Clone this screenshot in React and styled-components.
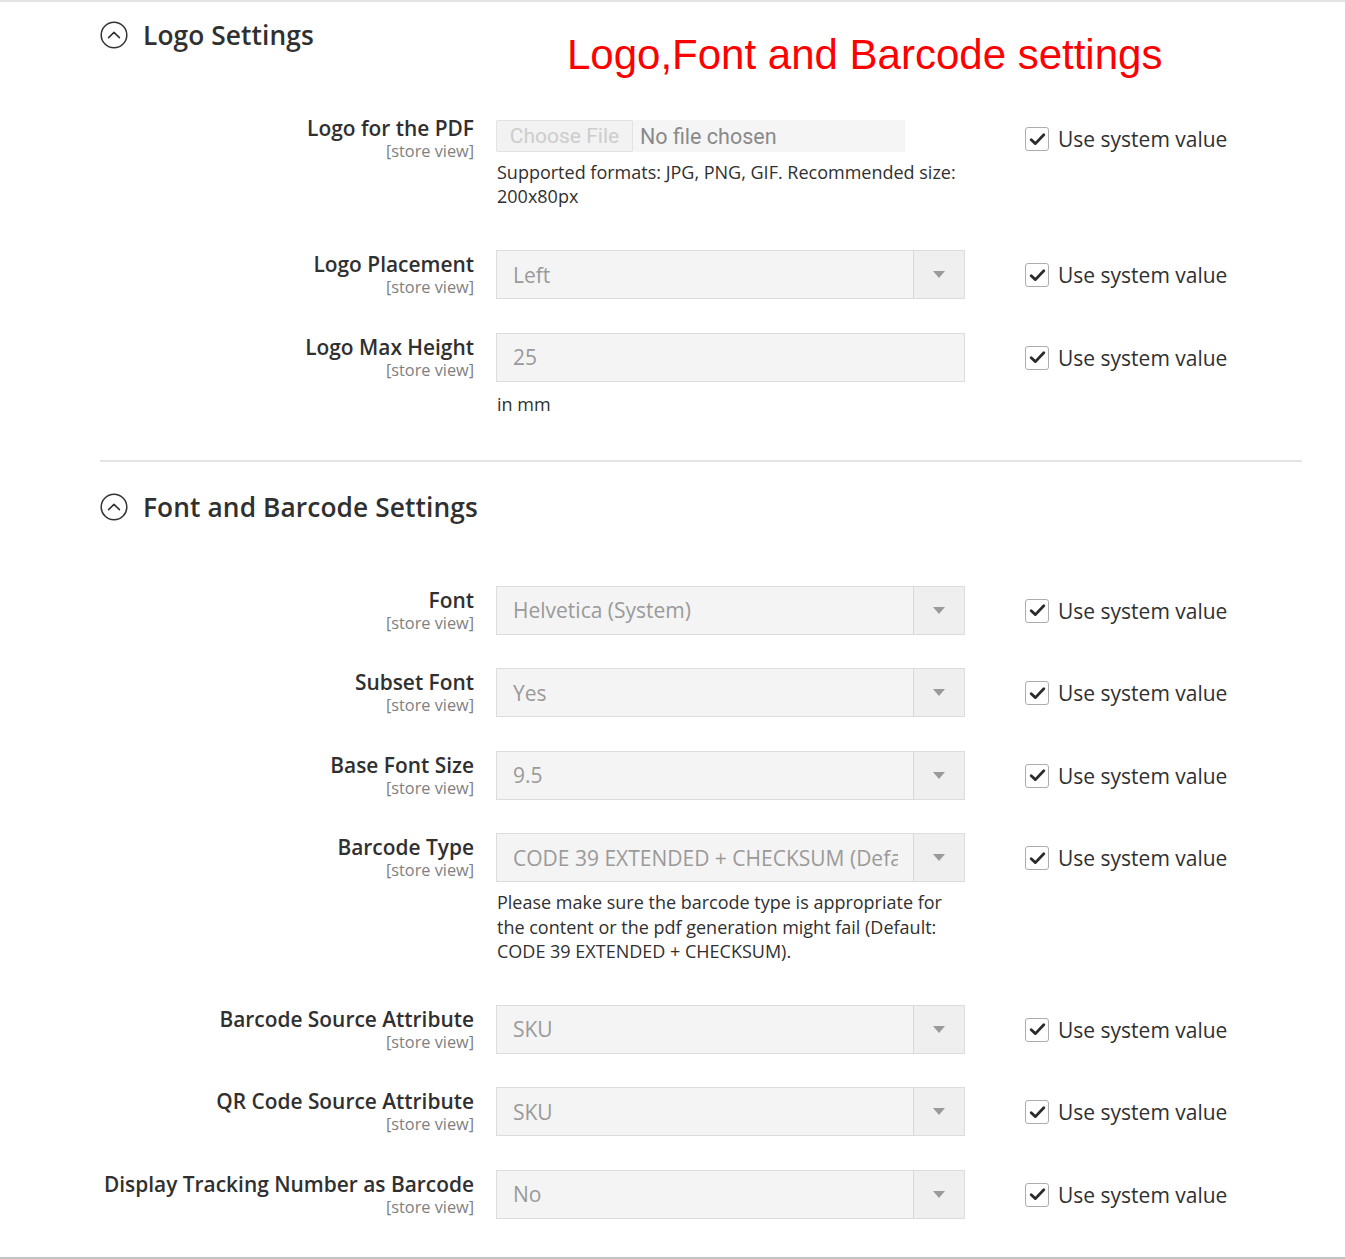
import React from "react";
import styled, { createGlobalStyle } from "styled-components";

const GlobalStyle = createGlobalStyle`
  html, body {
    margin: 0;
    padding: 0;
    background: #fff;
  }
  body {
    font-family: "Open Sans", "DejaVu Sans", sans-serif;
    color: #303030;
  }
`;

const logoFields = [
  { label: "Logo for the PDF", type: "file", note: "Supported formats: JPG, PNG, GIF. Recommended size: 200x80px" },
  { label: "Logo Placement", type: "select", value: "Left" },
  { label: "Logo Max Height", type: "input", value: "25", note: "in mm" },
];

const fontFields = [
  { label: "Font", type: "select", value: "Helvetica (System)" },
  { label: "Subset Font", type: "select", value: "Yes" },
  { label: "Base Font Size", type: "select", value: "9.5" },
  {
    label: "Barcode Type",
    type: "select",
    value: "CODE 39 EXTENDED + CHECKSUM (Default)",
    note: "Please make sure the barcode type is appropriate for the content or the pdf generation might fail (Default: CODE 39 EXTENDED + CHECKSUM).",
  },
  { label: "Barcode Source Attribute", type: "select", value: "SKU" },
  { label: "QR Code Source Attribute", type: "select", value: "SKU" },
  { label: "Display Tracking Number as Barcode", type: "select", value: "No" },
];

const CollapseIcon = () => (
  <svg width="28" height="28" viewBox="0 0 28 28" fill="none">
    <circle cx="14" cy="14" r="12.8" stroke="#333" strokeWidth="1.5" />
    <path d="M8.6 16.6 L14 11.4 L19.4 16.6" stroke="#333" strokeWidth="1.6" strokeLinecap="round" strokeLinejoin="round" />
  </svg>
);

const CheckIcon = () => (
  <svg width="17" height="15" viewBox="0 0 17 15" fill="none">
    <path d="M2.2 7.8 L6.4 11.6 L14.8 2.8" stroke="#2b2b2b" strokeWidth="2.8" strokeLinecap="round" strokeLinejoin="round" />
  </svg>
);

const renderControl = (field) => {
  if (field.type === "file") {
    return (
      <FileBox>
        <FileButton>Choose File</FileButton>
        <FileName>No file chosen</FileName>
      </FileBox>
    );
  }
  if (field.type === "select") {
    return (
      <SelectBox>
        <SelectValue>{field.value}</SelectValue>
        <SelectArrow>
          <Triangle />
        </SelectArrow>
      </SelectBox>
    );
  }
  return (
    <InputBox>
      <SelectValue>{field.value}</SelectValue>
    </InputBox>
  );
};

const renderRows = (fields) =>
  fields.map((field) => (
    <Row key={field.label}>
      <LabelCell>
        <LabelText>{field.label}</LabelText>
        <Scope>[store view]</Scope>
      </LabelCell>
      <ControlCell compact={field.type === "file"}>
        {renderControl(field)}
        {field.note && <Note>{field.note}</Note>}
      </ControlCell>
      <UseSystemCell>
        <CheckBox>
          <CheckIcon />
        </CheckBox>
        <UseSystemLabel>Use system value</UseSystemLabel>
      </UseSystemCell>
    </Row>
  ));

export default function App() {
  return (
    <Page>
      <GlobalStyle />
      <Caption>Logo,Font and Barcode settings</Caption>
      <Container>
        <Section>
          <SectionHeader>
            <CollapseIcon />
            <SectionTitle>Logo Settings</SectionTitle>
          </SectionHeader>
          <Fields>{renderRows(logoFields)}</Fields>
        </Section>
        <Section divided>
          <SectionHeader>
            <CollapseIcon />
            <SectionTitle>Font and Barcode Settings</SectionTitle>
          </SectionHeader>
          <Fields>{renderRows(fontFields)}</Fields>
        </Section>
      </Container>
    </Page>
  );
}

const Page = styled.div`
  position: relative;
  width: 1345px;
  height: 1259px;
  box-sizing: border-box;
  border-top: 2px solid #e3e3e3;
  border-bottom: 2px solid #c4c4c4;
  padding-top: 17px;
  overflow: hidden;
`;

const Caption = styled.div`
  position: absolute;
  left: 567px;
  top: 32px;
  font-family: "Liberation Sans", Arial, sans-serif;
  font-size: 42px;
  line-height: 42px;
  color: #ff0000;
  white-space: nowrap;
`;

const Container = styled.div`
  margin-left: 100px;
  width: 1202px;
`;

const Section = styled.section`
  border-top: ${({ divided }) => (divided ? "2px solid #e3e3e3" : "none")};
  border-bottom: ${({ divided }) => (divided ? "1px solid #cfcfcf" : "none")};
  padding-top: ${({ divided }) => (divided ? "29px" : "0")};
  padding-bottom: ${({ divided }) => (divided ? "38px" : "36px")};
`;

const SectionHeader = styled.div`
  display: flex;
  align-items: center;
  column-gap: 15px;
  height: 32px;
`;

const SectionTitle = styled.h2`
  margin: 0;
  font-size: 26.3px;
  font-weight: 600;
  line-height: 32px;
  color: #303030;
  letter-spacing: 0.1px;
`;

const Fields = styled.div`
  display: flex;
  flex-direction: column;
  row-gap: 33.5px;
  padding-top: 63px;
`;

const Row = styled.div`
  display: grid;
  grid-template-columns: 374px 469px auto;
  column-gap: 22px;
  align-items: start;
`;

const LabelCell = styled.div`
  display: flex;
  flex-direction: column;
  align-items: flex-end;
  text-align: right;
  padding-top: 1px;
`;

const LabelText = styled.span`
  font-size: 20.9px;
  font-weight: 600;
  line-height: 26px;
  color: #303030;
  white-space: nowrap;
`;

const Scope = styled.span`
  font-size: 16.3px;
  line-height: 20px;
  color: #808080;
`;

const ControlCell = styled.div`
  display: flex;
  flex-direction: column;
  padding-top: ${({ compact }) => (compact ? "6px" : "0")};
`;

const FileBox = styled.div`
  display: flex;
  align-items: center;
  width: 409px;
  height: 32px;
  background: #f5f5f5;
  font-family: Roboto, "Liberation Sans", sans-serif;
`;

const FileButton = styled.div`
  display: flex;
  align-items: center;
  justify-content: center;
  box-sizing: border-box;
  width: 137px;
  height: 32px;
  border: 1px solid #e2e2e2;
  border-radius: 2px;
  background: #f2f2f2;
  color: #cdcdcd;
  font-size: 21px;
`;

const FileName = styled.span`
  margin-left: 7px;
  font-size: 21.5px;
  color: #8a8a8a;
`;

const SelectBox = styled.div`
  display: flex;
  box-sizing: border-box;
  height: 49px;
  border: 1px solid #dcdcdc;
  background: #f4f4f4;
`;

const InputBox = styled(SelectBox)``;

const SelectValue = styled.div`
  flex: 1;
  min-width: 0;
  margin-left: 16px;
  margin-right: 15px;
  display: flex;
  align-items: center;
  font-size: 21px;
  color: #9a9a9a;
  white-space: nowrap;
  overflow: hidden;
`;

const SelectArrow = styled.div`
  flex: 0 0 50px;
  display: flex;
  align-items: center;
  justify-content: center;
  border-left: 1px solid #d8d8d8;
  background: #efefef;
`;

const Triangle = styled.span`
  width: 0;
  height: 0;
  border-left: 6px solid transparent;
  border-right: 6px solid transparent;
  border-top: 7px solid #9a9a9a;
`;

const Note = styled.p`
  margin: 8px 0 8px 1px;
  font-size: 18px;
  line-height: 24.3px;
  color: #303030;
  padding-right: 4px;

  ${InputBox} + & {
    margin-top: 10px;
  }
`;

const UseSystemCell = styled.div`
  display: flex;
  align-items: center;
  column-gap: 9px;
  margin-left: 38px;
  padding-top: 12px;
`;

const CheckBox = styled.span`
  display: flex;
  align-items: center;
  justify-content: center;
  box-sizing: border-box;
  width: 24px;
  height: 24px;
  border: 1px solid #adadad;
  border-radius: 3px;
  background: #fff;
`;

const UseSystemLabel = styled.span`
  font-size: 21px;
  line-height: 26px;
  color: #303030;
  white-space: nowrap;
`;
